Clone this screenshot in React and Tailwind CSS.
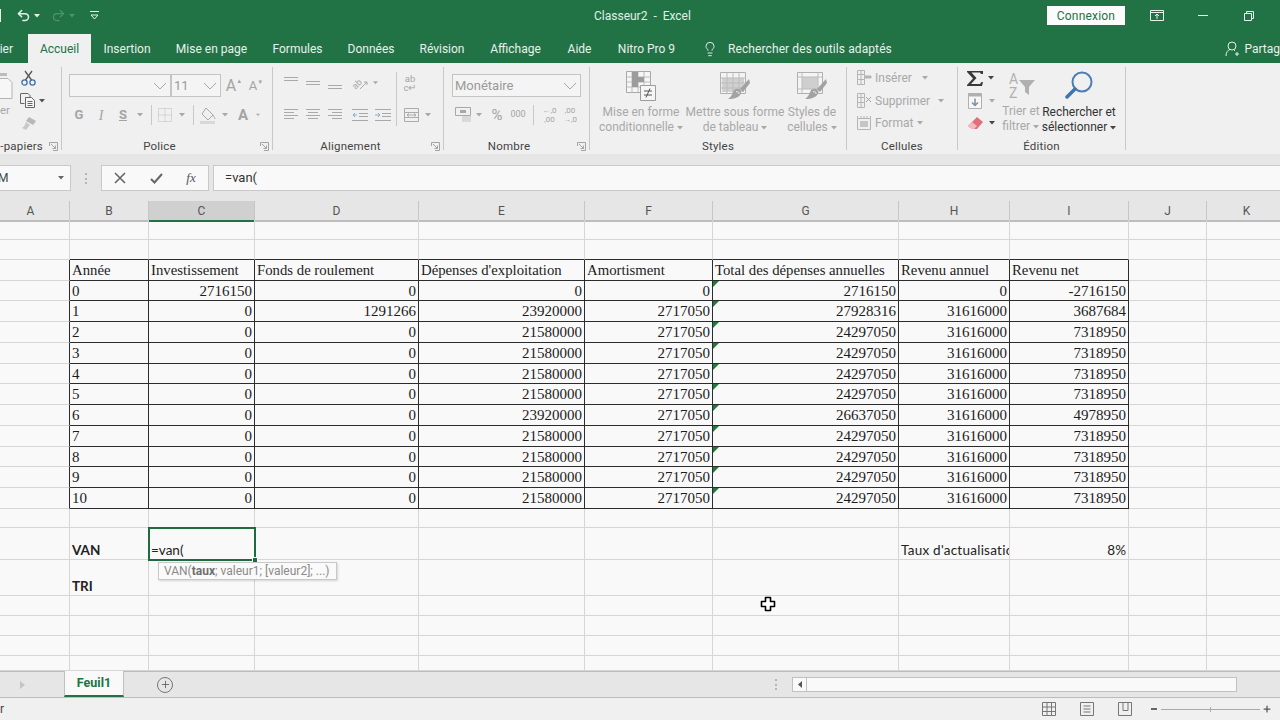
import React from 'react';
import { Undo2, Redo2, Lightbulb, Plus } from 'lucide-react';

const colsClass = 'grid-cols-[70px_79px_106px_164px_166px_128px_186px_111px_119px_78px_80px]';

const headers = ['Année', 'Investissement', 'Fonds de roulement', "Dépenses d'exploitation", 'Amortisment', 'Total des dépenses annuelles', 'Revenu annuel', 'Revenu net'];
const typical = [0, 0, 21580000, 2717050, 24297050, 31616000, 7318950];
const data = [
    [0, 2716150, 0, 0, 0, 2716150, 0, -2716150],
    [1, 0, 1291266, 23920000, 2717050, 27928316, 31616000, 3687684],
    [2, ...typical],
    [3, ...typical],
    [4, ...typical],
    [5, ...typical],
    [6, 0, 0, 23920000, 2717050, 26637050, 31616000, 4978950],
    [7, ...typical],
    [8, ...typical],
    [9, ...typical],
    [10, ...typical],
];
const tabs = [
    ['Insertion', 'w-[72px]'],
    ['Mise en page', 'w-[97px]'],
    ['Formules', 'w-[75px]'],
    ['Données', 'w-[72px]'],
    ['Révision', 'w-[70px]'],
    ['Affichage', 'w-[77px]'],
    ['Aide', 'w-[51px]'],
    ['Nitro Pro 9', 'w-[83px]'],
];
const columns = ['A', 'B', 'C', 'D', 'E', 'F', 'G', 'H', 'I', 'J', 'K'];

// Small dropdown arrow used all over the ribbon
const Caret = ({ color = '#a8a8a8' }) => (
    <svg className="inline-block align-middle" width="6" height="4" viewBox="0 0 6 4"><path d="M0 0h6L3 3.5z" fill={color} /></svg>
);

const Slot = ({ w, children }) => <div className={`${w} h-full flex items-center justify-center shrink-0`}>{children}</div>;

const Lines = ({ rows, color = '#a9a9a9', w = 16 }) => (
    <svg width={w} height="14" viewBox={`0 0 ${w} 14`} stroke={color} strokeWidth="1" fill="none">
        {rows.map(([y, x1, x2], i) => <path key={i} d={`M${x1} ${y + 0.5}H${x2}`} />)}
    </svg>
);

const Launcher = () => (
    <svg width="9" height="9" viewBox="0 0 9 9" fill="none" stroke="#a4a4a4">
        <path d="M.5 4V.5h8v8H4" /><path d="M2 2l4.5 4.5M6.5 3.5v3h-3" />
    </svg>
);

const Chevron = () => (
    <svg width="14" height="8" viewBox="0 0 14 8" fill="none" stroke="#a8a8a8"><path d="M1 1l6 6 6-6" /></svg>
);

const Combo = ({ w, text }) => (
    <div className={`${w} h-[23px] border border-[#c4c4c4] bg-[#f4f4f4] flex items-center justify-between pl-[2px] pr-[3px] text-[13px] text-[#9a9a9a]`}>
        <span className="pt-[1px]">{text}</span>
        <Chevron />
    </div>
);

const Group = ({ w, label, launcher, children, labelClass = 'text-center' }) => (
    <>
        <div className={`${w} h-full flex flex-col shrink-0`}>
            <div className="h-[75px] overflow-hidden">{children}</div>
            <div className="h-[16px] flex items-center pt-[1px]">
                <div className={`flex-1 text-[11.5px] leading-none text-[#444] tracking-[0.2px] whitespace-nowrap ${labelClass}`}>{label}</div>
                {launcher && <div className="w-[15px] flex justify-center"><Launcher /></div>}
            </div>
        </div>
        <div className="w-px h-[83px] mt-[4px] bg-[#c8c8c8] shrink-0" />
    </>
);

const CondFormatIcon = () => (
    <svg width="30" height="30" viewBox="0 0 30 30">
        <path d="M.5.5h24v21H.5z" fill="#f6f6f6" stroke="#a8a8a8" />
        <path d="M6 .5v21M12 .5v21M18 .5v14M.5 6h24M.5 11h24M.5 16h14" stroke="#bcbcbc" fill="none" />
        <path d="M6 1h6v5H6zM6 6h12v5H6zM6 11h6v5H6z" fill="#9c9c9c" />
        <path d="M14.5 14.5h15v15h-15z" fill="#f6f6f6" stroke="#9c9c9c" />
        <path d="M18 20h8M18 24h8M24 17.5l-4 9" stroke="#555" fill="none" />
    </svg>
);

const BrushIcon = ({ cells }) => (
    <svg width="30" height="30" viewBox="0 0 30 30">
        <path d="M.5 1.5h25v21H.5z" fill="#f4f4f4" stroke="#b0b0b0" />
        {cells ? <path d="M2 7h22v14H2z" fill="#d0d0d0" /> : <path d="M5 6h16v12H5z" fill="#cfcfcf" />}
        <path d={cells ? 'M.5 7h25M.5 12h25M.5 17h25M7 1.5v21M13 1.5v21M19 1.5v21' : 'M.5 6h25M.5 18h25M5 1.5v21M21 1.5v21'} stroke="#bcbcbc" fill="none" />
        <path d="M29 8l-9 10 3 3 7-9z" fill="#a2a2a2" />
        <path d="M14 19c4-3 8 0 7 3-1 4-6 6-13 6 3-2 4-4 6-9z" fill="#a2a2a2" />
        <path d="M16 21c2-1 3 0 3 2" stroke="#efefef" fill="none" />
    </svg>
);

const CellIcon = ({ kind }) => (
    <svg width="15" height="16" viewBox="0 0 15 16" fill="none" stroke="#b4b4b4">
        {kind === 'format' ? (
            <>
                <path d="M.5 3.5h13v11H.5z" /><path d="M3 6h8v6H3z" fill="#c6c6c6" stroke="none" /><path d="M.5 1v2M4 1v2M7 1v2M10 1v2M13.5 1v2" />
            </>
        ) : (
            <>
                <path d="M.5.5h7v4h-7zM.5 4.5h7v5h-7zM.5 9.5h7v5h-7zM4 .5v14" />
                {kind === 'insert' ? <path d="M8 6h6v2H8z" fill="#b4b4b4" /> : <path d="M9 4l5 5M14 4l-5 5" stroke="#a0a0a0" />}
            </>
        )}
    </svg>
);

const TextRow = ({ kind, text, gap }) => (
    <div className="h-[22.5px] flex items-center pl-[10px] text-[12px] text-[#a8a8a8]">
        <CellIcon kind={kind} />
        <span className="ml-[3px] leading-none">{text}</span>
        <span className={`${gap} flex`}><Caret /></span>
    </div>
);

const Ribbon = () => (
    <div className="h-[91px] bg-[#f0f0f0] flex">
        <Group w="w-[61px]" label="-papiers" launcher labelClass="text-right pr-[3px]">
            <div className="flex h-full">
                <div className="w-[18px] pt-[8px]">
                    <svg width="13" height="30" viewBox="0 0 13 30" fill="none">
                        <path d="M0 2h7v3H0z" fill="#bdbdbd" />
                        <path d="M0 7.5h8l4 4v16H0" fill="#f7f7f7" stroke="#b4b4b4" />
                    </svg>
                    <div className="text-[11.5px] leading-none text-[#a8a8a8] mt-[4px]">er</div>
                </div>
                <div className="pt-[4px]">
                    <div className="h-[22.5px] flex items-center pl-[3px]">
                        <svg width="15" height="16" viewBox="0 0 15 16" fill="none" stroke="#3f6fa8" strokeWidth="1.3">
                            <circle cx="3.5" cy="12.5" r="2.6" /><circle cx="11.5" cy="12.5" r="2.6" />
                            <path d="M4.5 10L11 1M10.5 10L4 1" stroke="#555" />
                        </svg>
                    </div>
                    <div className="h-[22.5px] flex items-center pl-[2px] gap-[3px]">
                        <svg width="16" height="15" viewBox="0 0 16 15" fill="none" stroke="#666">
                            <path d="M1 .5h7l2 2v2M.5 .5v10h4" /><path d="M5.5 4.5h6l3 3v7h-9z" fill="#f7f7f7" /><path d="M7.5 8.5h5M7.5 10.5h5M7.5 12.5h5" />
                        </svg>
                        <Caret color="#555" />
                    </div>
                    <div className="h-[22.5px] flex items-center pl-[3px]">
                        <svg width="15" height="13" viewBox="0 0 15 13">
                            <path d="M8 0l7 4-3 4-7-4z" fill="#b8b8b8" /><path d="M5 5l4 3-4 5-4-2c2-1 3-3 4-6z" fill="#c8c8c8" />
                        </svg>
                    </div>
                </div>
            </div>
        </Group>

        <Group w="w-[210px]" label="Police" launcher>
            <div className="flex pl-[7px] pt-[11px]">
                <Combo w="w-[102px]" />
                <Combo w="w-[50px]" text="11" />
                <div className="ml-[2px] flex items-center text-[#a4a4a4]">
                    <span className="w-[22px] text-[16px] leading-none text-center whitespace-nowrap">A<span className="text-[6px] align-top">▲</span></span>
                    <span className="w-[22px] text-[13px] leading-none text-center whitespace-nowrap">A<span className="text-[6px] align-top">▼</span></span>
                </div>
            </div>
            <div className="flex h-[22px] mt-[7px] pl-[6px] text-[#a4a4a4] text-[13px]">
                <Slot w="w-[22px]"><span className="font-bold">G</span></Slot>
                <Slot w="w-[22px]"><span className="italic font-['Liberation_Serif',serif] text-[14px]">I</span></Slot>
                <Slot w="w-[22px]"><span className="underline font-bold">S</span></Slot>
                <Slot w="w-[12px]"><Caret /></Slot>
                <Slot w="w-[10px]"><div className="w-px h-[20px] bg-[#c8c8c8]" /></Slot>
                <Slot w="w-[18px]">
                    <svg width="14" height="14" viewBox="0 0 14 14" fill="none" stroke="#bdbdbd" strokeDasharray="1 1"><path d="M.5.5h13v13H.5zM7 .5v13M.5 7h13" /></svg>
                </Slot>
                <Slot w="w-[16px]"><Caret /></Slot>
                <Slot w="w-[6px]"><div className="w-px h-[20px] bg-[#c8c8c8]" /></Slot>
                <Slot w="w-[24px]">
                    <svg width="16" height="17" viewBox="0 0 16 17" fill="none">
                        <path d="M6 1l7 7-5 5-6-6z" stroke="#a8a8a8" /><path d="M13 8c1 2 2 3 2 4" stroke="#a8a8a8" /><path d="M0 14h15v3H0z" fill="#d8d8d8" />
                    </svg>
                </Slot>
                <Slot w="w-[10px]"><Caret /></Slot>
                <Slot w="w-[26px]"><span className="font-bold text-[15px]">A</span></Slot>
                <Slot w="w-[4px]"><Caret /></Slot>
            </div>
        </Group>

        <Group w="w-[170px]" label="Alignement" launcher>
            <div className="flex pl-[7px] pt-[9px]">
                <div className="w-[111px]">
                    <div className="flex h-[22px]">
                        <Slot w="w-[22px]"><Lines rows={[[1, 0, 14], [4, 0, 14]]} w={14} /></Slot>
                        <Slot w="w-[22px]"><Lines rows={[[5, 0, 14], [8, 0, 14]]} w={14} /></Slot>
                        <Slot w="w-[22px]"><Lines rows={[[9, 0, 14], [12, 0, 14]]} w={14} /></Slot>
                        <Slot w="w-[27px]">
                            <svg width="16" height="15" viewBox="0 0 16 15" fill="none" stroke="#a8a8a8">
                                <text x="0" y="11" fontSize="9" fontFamily="Roboto" fill="#a8a8a8" stroke="none" transform="rotate(-45 5 8)">ab</text>
                                <path d="M8 13L15 6M12 6h3v3" />
                            </svg>
                        </Slot>
                        <Slot w="w-[5px]"><Caret /></Slot>
                    </div>
                    <div className="flex h-[22px] mt-[10px]">
                        <Slot w="w-[22px]"><Lines rows={[[1, 0, 14], [4, 0, 10], [7, 0, 14], [10, 0, 10]]} w={14} /></Slot>
                        <Slot w="w-[22px]"><Lines rows={[[1, 0, 14], [4, 2, 12], [7, 0, 14], [10, 2, 12]]} w={14} /></Slot>
                        <Slot w="w-[22px]"><Lines rows={[[1, 0, 14], [4, 4, 14], [7, 0, 14], [10, 4, 14]]} w={14} /></Slot>
                        <Slot w="w-[27px]">
                            <svg width="16" height="12" viewBox="0 0 16 12" fill="none" stroke="#a8a8a8"><path d="M0 .5h16M7 4.5h9M7 7.5h9M0 11.5h16" /><path d="M5 6H1M3 4L1 6l2 2" stroke="#8fa9c4" /></svg>
                        </Slot>
                        <Slot w="w-[20px]">
                            <svg width="16" height="12" viewBox="0 0 16 12" fill="none" stroke="#a8a8a8"><path d="M0 .5h16M7 4.5h9M7 7.5h9M0 11.5h16" /><path d="M0 6h4M3 4l2 2-2 2" stroke="#8fa9c4" /></svg>
                        </Slot>
                    </div>
                </div>
                <div className="w-px h-[54px] bg-[#c8c8c8] ml-[5px]" />
                <div className="ml-[3px]">
                    <div className="h-[22px] w-[20px] text-[9.5px] leading-[9px] text-[#a4a4a4] flex flex-col justify-center items-center"><span>ab</span><span>c↵</span></div>
                    <div className="flex h-[22px] mt-[10px]">
                        <Slot w="w-[22px]">
                            <svg width="15" height="14" viewBox="0 0 15 14" fill="none" stroke="#ababab"><path d="M.5.5h14v13H.5zM.5 4.5h14M.5 9.5h14" /><path d="M3 7h9M10 5.5L12 7l-2 1.5M5 5.5L3 7l2 1.5" /></svg>
                        </Slot>
                        <Slot w="w-[12px]"><Caret /></Slot>
                    </div>
                </div>
            </div>
        </Group>

        <Group w="w-[145px]" label="Nombre" launcher>
            <div className="pl-[8px] pt-[11px]">
                <Combo w="w-[129px]" text="Monétaire" />
                <div className="flex h-[22px] mt-[7px] text-[#a4a4a4]">
                    <Slot w="w-[22px]">
                        <svg width="17" height="16" viewBox="0 0 17 16" fill="none"><path d="M.5.5h15v8H.5z" stroke="#a8a8a8" /><path d="M5 3h6v3H5z" fill="#a8a8a8" /><path d="M7 10h9M7 12h9M7 14h9" stroke="#c2c2c2" /></svg>
                    </Slot>
                    <Slot w="w-[10px]"><Caret /></Slot>
                    <Slot w="w-[26px]"><span className="text-[15px]">%</span></Slot>
                    <Slot w="w-[16px]"><span className="text-[9px]">000</span></Slot>
                    <Slot w="w-[14px]"><div className="w-px h-[20px] bg-[#c8c8c8]" /></Slot>
                    <Slot w="w-[19px]"><span className="text-[8px] leading-[9px] text-center">←,0<br />,00</span></Slot>
                    <Slot w="w-[22px]"><span className="text-[8px] leading-[9px] text-center">,00<br />→,0</span></Slot>
                </div>
            </div>
        </Group>

        <Group w="w-[256px]" label="Styles">
            <div className="flex pl-[7px] pt-[8px] text-[12px] leading-[15px] text-[#a8a8a8] text-center">
                <div className="w-[88px] flex flex-col items-center">
                    <CondFormatIcon />
                    <div className="mt-[4px] whitespace-nowrap">Mise en forme<br />conditionnelle <Caret /></div>
                </div>
                <div className="w-[100px] flex flex-col items-center">
                    <BrushIcon cells />
                    <div className="mt-[4px] whitespace-nowrap">Mettre sous forme<br />de tableau <Caret /></div>
                </div>
                <div className="w-[54px] flex flex-col items-center">
                    <BrushIcon />
                    <div className="mt-[4px] whitespace-nowrap">Styles de<br />cellules <Caret /></div>
                </div>
            </div>
        </Group>

        <Group w="w-[110px]" label="Cellules">
            <div className="pt-[4px]">
                <TextRow kind="insert" text="Insérer" gap="ml-[10px]" />
                <TextRow kind="delete" text="Supprimer" gap="ml-[8px]" />
                <TextRow kind="format" text="Format" gap="ml-[4px]" />
            </div>
        </Group>

        <Group w="w-[167px]" label="Édition">
            <div className="flex h-full">
                <div className="w-[42px] pt-[4px] pl-[9px]">
                    <div className="h-[22.5px] flex items-center gap-[4px]">
                        <svg width="17" height="15" viewBox="0 0 17 15"><path d="M0 0h16v3h-2l-1-1.500H4.500L9.500 7l-5.500 6H13l1.500-2H16l-1 4H0v-1l6-6.500L0 1z" fill="#3a3a3a" /></svg>
                        <Caret color="#444" />
                    </div>
                    <div className="h-[22.5px] flex items-center gap-[7px] pl-[1px]">
                        <svg width="14" height="16" viewBox="0 0 14 16" fill="none"><path d="M.5.5h13v15H.5z" stroke="#b0b0b0" fill="#f7f7f7" /><path d="M.5.500h13v3H.5z" fill="#b0b0b0" /><path d="M7 5.500v7M4 9.500l3 3 3-3" stroke="#7e8f9e" strokeWidth="1.500" /></svg>
                        <Caret />
                    </div>
                    <div className="h-[22.5px] flex items-center gap-[6px]">
                        <svg width="16" height="13" viewBox="0 0 16 13"><path d="M10 0l6 5-6 7H5L1 9z" fill="#e1707c" /><path d="M1 9l4-4 5 4-3 3H5z" fill="#f2b9bf" /></svg>
                        <Caret color="#444" />
                    </div>
                </div>
                <div className="w-[42px] flex flex-col items-center text-[12px] leading-[15px] text-[#a8a8a8] pt-[9px]">
                    <svg width="30" height="28" viewBox="0 0 30 28" fill="none">
                        <text x="3" y="12" fontSize="14" fill="#b0b0b0" fontFamily="Roboto">A</text>
                        <text x="3" y="26" fontSize="14" fill="#b0b0b0" fontFamily="Roboto">Z</text>
                        <path d="M13 8h16l-6 7v8l-4-3v-5z" fill="#b0b0b0" />
                    </svg>
                    <div className="mt-[4px] whitespace-nowrap text-left">Trier et<br />filtrer <Caret /></div>
                </div>
                <div className="w-[74px] flex flex-col items-center text-[12px] leading-[15px] text-[#333] pt-[8px]">
                    <svg width="28" height="29" viewBox="0 0 28 29" fill="none">
                        <circle cx="17" cy="11" r="9.500" stroke="#4a7db5" strokeWidth="2" />
                        <path d="M10 18l-8 8" stroke="#3f74ad" strokeWidth="3.500" strokeLinecap="round" />
                    </svg>
                    <div className="mt-[5px] whitespace-nowrap text-center">Rechercher et<br />sélectionner <Caret color="#444" /></div>
                </div>
            </div>
        </Group>
    </div>
);

const FormulaBar = () => (
    <div className="h-[47px] bg-[#e6e6e6] pt-[11px]">
        <div className="h-[26px] flex">
            <div className="w-[71px] bg-[#f9f9f9] border border-l-0 border-[#c9c9c9] flex items-center justify-between pr-[6px] text-[12px] text-[#444]">
                <span className="-ml-[2px]">M</span><Caret color="#666" />
            </div>
            <div className="w-[30px] flex items-center justify-center">
                <div className="h-[11px] border-l-2 border-dotted border-[#b5b5b5]" />
            </div>
            <div className="w-[108px] bg-[#f9f9f9] border border-[#c9c9c9] flex items-center">
                <Slot w="w-[36px]">
                    <svg width="12" height="12" viewBox="0 0 12 12" stroke="#666" strokeWidth="1.600"><path d="M1 1l10 10M11 1L1 11" /></svg>
                </Slot>
                <Slot w="w-[36px]">
                    <svg width="13" height="11" viewBox="0 0 13 11" fill="none" stroke="#666" strokeWidth="2"><path d="M1 6l3.500 3.500L12 1" /></svg>
                </Slot>
                <Slot w="w-[34px]"><span className="font-['Liberation_Serif',serif] italic text-[13px] text-[#555]">fx</span></Slot>
            </div>
            <div className="flex-1 ml-[4px] bg-[#f9f9f9] border border-r-0 border-[#c9c9c9] flex items-center pl-[11px] text-[13px] text-[#333]">=van(</div>
        </div>
    </div>
);

const cellClass = (r, c) => {
    const black = r >= 1 && r <= 13 && c >= 1 && c <= 8;
    const right = r >= 2 && r <= 13 && c <= 8;
    return `${black ? 'border-b-[#2c2c2c]' : 'border-b-[#d6d6d6]'} ${right ? 'border-r-[#2c2c2c]' : 'border-r-[#d6d6d6]'}`;
};

const Cell = ({ r, c }) => {
    let content = null;
    const head = "font-['Liberation_Serif',serif] text-[14.75px] text-[#1c1c1c] items-center pt-[2px]";
    const num = "font-['Liberation_Serif',serif] text-[15px] text-[#1c1c1c] items-center pt-[1px]";
    const sans = "font-['Lato',sans-serif] text-[13.5px] leading-[16px] text-[#222] items-end pb-[1px]";
    let font = sans;

    if (r === 2 && c >= 1 && c <= 8) {
        content = headers[c - 1];
        font = `${head} justify-start`;
    } else if (r >= 3 && r <= 13 && c >= 1 && c <= 8) {
        content = data[r - 3][c - 1];
        font = `${num} ${c === 1 ? 'justify-start' : 'justify-end'}`;
    } else if (r === 15 && c === 1) {
        content = <b>VAN</b>;
    } else if (r === 16 && c === 1) {
        content = <b>TRI</b>;
    } else if (r === 15 && c === 7) {
        content = <span className="tracking-[0.25px]">Taux d'actualisation</span>;
    } else if (r === 15 && c === 8) {
        content = '8%';
        font = `${sans} justify-end`;
    }

    const selected = r === 15 && c === 2;
    const flagged = r >= 3 && r <= 13 && c === 6;

    return (
        <div className={`relative flex border-r border-b px-[2px] min-w-0 whitespace-nowrap ${cellClass(r, c)} ${font} ${selected ? 'z-10' : 'overflow-hidden'}`}>
            {flagged && (
                <svg className="absolute left-0 top-0" width="6" height="6" viewBox="0 0 6 6"><path d="M0 0h6L0 6z" fill="#1f7a3c" /></svg>
            )}
            {selected ? (
                <>
                    =van(
                    <div className="absolute -left-[1px] -top-[1px] -right-[2px] -bottom-[2px] border-2 border-[#1f6b3f]" />
                    <div className="absolute -right-[4px] -bottom-[4px] w-[6px] h-[6px] bg-[#1f6b3f] border border-[#f9f9f9]" />
                    <div className="absolute left-[9px] top-[34px] w-[179px] h-[18px] bg-[#fafafa] border border-[#c8c8c8] shadow-[1px_1px_2px_rgba(0,0,0,0.15)] flex items-center pl-[5px] font-['Roboto',sans-serif] text-[12px] text-[#8a8a8a]">
                        <span className="whitespace-pre">VAN(<b className="text-[#6f6f6f]">taux</b>; valeur1; [valeur2]; ...)</span>
                    </div>
                </>
            ) : content}
        </div>
    );
};

const SheetGrid = () => (
    <div className={`grid ${colsClass} grid-rows-[20px_19.5px_21px_repeat(11,20.75px)_19.5px_32px_35.5px_20px_20px_20px_15px] h-[451px] bg-[#f9f9f9]`}>
        {Array.from({ length: 21 }).map((_, r) =>
            columns.map((_, c) => <Cell key={`${r}-${c}`} r={r} c={c} />)
        )}
    </div>
);

export default function App() {
    return (
        <div className="relative w-[1280px] h-[720px] overflow-hidden bg-[#f0f0f0] font-['Roboto',sans-serif]">
            {/* Title bar */}
            <div className="h-[34px] pb-[3px] bg-[#217346] flex items-center text-[#e2efe7]">
                <div className="w-[594px] flex items-center">
                    <div className="w-px h-[13px] bg-[#e8f1ec]" />
                    <Undo2 className="ml-[15px] w-[15px] h-[15px]" strokeWidth={2.4} />
                    <div className="ml-[3px] flex"><Caret color="#e8f1ec" /></div>
                    <Redo2 className="ml-[11px] w-[15px] h-[15px] text-[#4f9170]" strokeWidth={2} />
                    <div className="ml-[3px] flex"><Caret color="#4f9170" /></div>
                    <svg className="ml-[15px]" width="9" height="9" viewBox="0 0 9 9" fill="none" stroke="#e8f1ec"><path d="M0 .5h9M1 4h7L4.500 8z" /></svg>
                </div>
                <div className="w-[92px] text-center text-[12px] whitespace-pre">Classeur2  -  Excel</div>
                <div className="ml-[361px] w-[78px] h-[19px] bg-[#fbfbfb] flex items-center justify-center text-[12px] tracking-[0.2px] text-[#217346]">Connexion</div>
                <svg className="ml-[25px]" width="14" height="11" viewBox="0 0 14 11" fill="none" stroke="#e8f1ec"><path d="M.5.5h13v10H.5zM.5 2.500h13M7 9V4.500M5 6l2-2 2 2" /></svg>
                <div className="ml-[34px] w-[10px] h-px bg-[#e8f1ec]" />
                <svg className="ml-[36px]" width="10" height="10" viewBox="0 0 10 10" fill="none" stroke="#e8f1ec"><path d="M.5 2.500h7v7h-7zM2.500 2.500v-2h7v7h-2" /></svg>
            </div>

            {/* Ribbon tabs */}
            <div className="h-[29px] bg-[#217346] flex text-[12px] text-[#e8f1ec]">
                <div className="w-[28px] pr-[15px] flex items-center justify-end pt-[1px]">ier</div>
                <div className="w-[63px] bg-[#f0f0f0] text-[#217346] flex items-center justify-center pt-[1px]">Accueil</div>
                {tabs.map(([name, w]) => (
                    <div key={name} className={`${w} flex items-center justify-center pt-[1px]`}>{name}</div>
                ))}
                <Lightbulb className="ml-[14px] mt-[7px] w-[16px] h-[16px]" strokeWidth={1.400} />
                <div className="ml-[10px] flex items-center pt-[1px] tracking-[0.1px]">Rechercher des outils adaptés</div>
                <div className="ml-auto flex items-center gap-[3px] pt-[1px] whitespace-nowrap">
                    <svg width="16" height="16" viewBox="0 0 16 16" fill="none" stroke="#e8f1ec"><circle cx="7" cy="5" r="4" /><path d="M1 15c0-4 2-6 4-6.500M9 9l1 1M12 11v4M10 13h4" /></svg>
                    <span>Partag</span>
                </div>
            </div>

            <Ribbon />
            <FormulaBar />

            {/* Column letters */}
            <div className={`grid ${colsClass} h-[19px] bg-[#e6e6e6] text-[12px] text-[#555]`}>
                {columns.map((col) => (
                    <div key={col} className={`flex items-center justify-center pt-[1px] border-r border-[#c6c6c6] border-b-2 ${col === 'A' ? 'pr-[8px]' : ''} ${col === 'C' ? 'bg-[#d0d0d0] border-b-[#217346]' : 'border-b-[#bdbdbd]'}`}>{col}</div>
                ))}
            </div>

            <SheetGrid />

            {/* Sheet tabs and horizontal scroll bar */}
            <div className="h-[27px] bg-[#e6e6e6] border-t border-b border-[#bcbcbc] flex items-center">
                <svg className="ml-[20px]" width="5" height="8" viewBox="0 0 5 8"><path d="M0 0l5 4-5 4z" fill="#c4c4c4" /></svg>
                <div className="ml-[39px] w-[60px] h-[26px] -mt-[1px] bg-[#f9f9f9] border-x border-[#c0c0c0] border-b-2 border-b-[#217346] flex items-center justify-center text-[12.5px] font-bold text-[#217346]">Feuil1</div>
                <div className="ml-[33px] w-[16px] h-[16px] rounded-full border border-[#777] flex items-center justify-center">
                    <Plus className="w-[11px] h-[11px] text-[#666]" strokeWidth={2} />
                </div>
                <div className="ml-[602px] h-[11px] border-l-2 border-dotted border-[#b5b5b5]" />
                <div className="ml-[15px] w-[445px] h-[15px] bg-[#f9f9f9] border border-[#c0c0c0] flex">
                    <div className="w-[14px] border-r border-[#c0c0c0] flex items-center justify-center">
                        <svg width="4" height="7" viewBox="0 0 4 7"><path d="M4 0L0 3.500 4 7z" fill="#555" /></svg>
                    </div>
                </div>
            </div>

            {/* Status bar */}
            <div className="h-[22px] bg-[#f0f0f0] flex items-center text-[12px] text-[#444]">
                <span className="w-[3px] leading-none">r</span>
                <svg className="ml-[1039px]" width="14" height="14" viewBox="0 0 14 14" fill="none" stroke="#777"><path d="M.5.5h13v13H.5zM.5 5h13M.5 9.500h13M5 .5v13M9.500 .5v13" /></svg>
                <svg className="ml-[24px]" width="14" height="14" viewBox="0 0 14 14" fill="none" stroke="#777"><path d="M.5.5h13v13H.5zM3.500 4h7M3.500 7h7M3.500 10h7" /></svg>
                <svg className="ml-[24px]" width="14" height="14" viewBox="0 0 14 14" fill="none" stroke="#777"><path d="M.5.5h13v13H.5zM5 .5v8h5v-8" /></svg>
                <div className="ml-[19px] w-[6px] h-[2px] bg-[#666]" />
                <div className="ml-[4px] w-[99px] h-px bg-[#aaa] flex justify-center items-center shrink-0"><div className="w-px h-[5px] bg-[#aaa]" /></div>
                <Plus className="ml-[2px] w-[10px] h-[10px] text-[#555]" strokeWidth={3} />
            </div>

            {/* Mouse pointer */}
            <svg className="absolute left-[760px] top-[596px]" width="16" height="16" viewBox="0 0 16 16">
                <path d="M5.500 1.500h5v4h4v5h-4v4h-5v-4h-4v-5h4z" fill="#fff" stroke="#000" strokeWidth="1.600" strokeLinejoin="round" />
            </svg>
        </div>
    );
}
